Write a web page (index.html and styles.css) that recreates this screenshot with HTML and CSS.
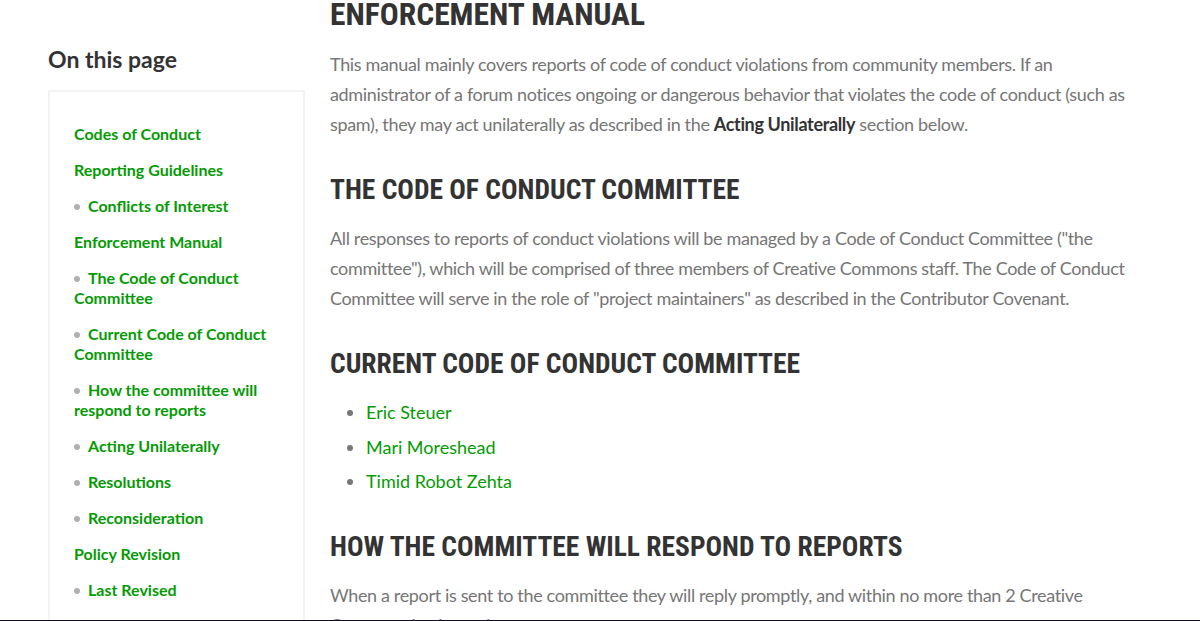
FILE: index.html
```html
<!DOCTYPE html>
<html lang="en">
<head>
    <meta charset="UTF-8">
    <title>Code of Conduct - Enforcement Manual</title>
    <link rel="stylesheet" href="styles.css">
</head>
<body>
<div class="page">
    <aside class="sidebar">
        <h3 class="toc-title">On this page</h3>
        <div class="toc-box">
            <ul class="toc">
                <li><a href="#codes">Codes of Conduct</a></li>
                <li><a href="#reporting">Reporting Guidelines</a></li>
                <li class="sub"><a href="#conflicts">Conflicts of Interest</a></li>
                <li><a href="#enforcement">Enforcement Manual</a></li>
                <li class="sub"><a href="#committee">The Code of Conduct Committee</a></li>
                <li class="sub"><a href="#current">Current Code of Conduct Committee</a></li>
                <li class="sub"><a href="#respond">How the committee will respond to reports</a></li>
                <li class="sub"><a href="#unilateral">Acting Unilaterally</a></li>
                <li class="sub"><a href="#resolutions">Resolutions</a></li>
                <li class="sub"><a href="#reconsideration">Reconsideration</a></li>
                <li><a href="#policy">Policy Revision</a></li>
                <li class="sub"><a href="#revised">Last Revised</a></li>
            </ul>
        </div>
    </aside>
    <main class="content">
        <h1 id="enforcement">Enforcement Manual</h1>
        <p>This manual mainly covers reports of code of conduct violations from community members. If an administrator of a forum notices ongoing or dangerous behavior that violates the code of conduct (such as spam), they may act unilaterally as described in the <strong>Acting Unilaterally</strong> section below.</p>

        <h2 id="committee">The Code of Conduct Committee</h2>
        <p>All responses to reports of conduct violations will be managed by a Code of Conduct Committee ("the committee"), which will be comprised of three members of Creative Commons staff. The Code of Conduct Committee will serve in the role of "project maintainers" as described in the Contributor Covenant.</p>

        <h2 id="current">Current Code of Conduct Committee</h2>
        <ul class="members">
            <li><a href="#">Eric Steuer</a></li>
            <li><a href="#">Mari Moreshead</a></li>
            <li><a href="#">Timid Robot Zehta</a></li>
        </ul>

        <h2 id="respond">How the committee will respond to reports</h2>
        <p>When a report is sent to the committee they will reply promptly, and within no more than 2 Creative Commons business days.</p>
    </main>
</div>
<div class="bottom-bar"></div>
</body>
</html>
```

FILE: styles.css
```css
body {
    margin: 0;
    font-family: Lato, "Open Sans", sans-serif;
    background-color: #fff;
    color: #767676;
    overflow: hidden;
}

a {
    color: #049b04;
    text-decoration: none;
}

.page {
    display: flex;
    gap: 25px;
    padding-left: 48px;
}

.sidebar {
    width: 257px;
    flex-shrink: 0;
    padding-top: 45px;
}

.toc-title {
    margin: 0 0 17px 0;
    font-size: 23px;
    line-height: 28px;
    font-weight: 700;
    color: #333;
}

.toc-box {
    border: 2px solid #f3f3f3;
    padding: 32px 20px 40px 24px;
    min-height: 600px;
}

.toc {
    list-style: none;
    margin: 0;
    padding: 0;
}

.toc li {
    font-size: 16px;
    line-height: 20px;
    font-weight: 700;
    margin-bottom: 16px;
}

.toc li.sub::before {
    content: "";
    display: inline-block;
    width: 6px;
    height: 6px;
    border-radius: 50%;
    background-color: #b0b0b0;
    margin-right: 8px;
    vertical-align: 2px;
}

.content {
    width: 827px;
}

h1, h2 {
    font-family: "Roboto Condensed", "Liberation Sans Narrow", "DejaVu Sans Condensed", Roboto, sans-serif;
    font-stretch: condensed;
    font-weight: 700;
    text-transform: uppercase;
    color: #333;
    line-height: 36px;
}

h1 {
    font-size: 31.5px;
    margin: -3px 0 16px 0;
}

h2 {
    font-size: 27.5px;
    margin: 33px 0 15px 0;
}

.content p {
    font-size: 18px;
    line-height: 30px;
    margin: 0;
    letter-spacing: -0.35px;
}

.content p strong {
    color: #333;
}

.members {
    margin: 0;
    padding-left: 36px;
    color: #777;
}

.members li {
    font-size: 18px;
    line-height: 30px;
    margin-bottom: 4.5px;
}

.bottom-bar {
    position: fixed;
    left: 0;
    right: 0;
    bottom: 0;
    height: 1px;
    background-color: #1b0b2b;
}
```
